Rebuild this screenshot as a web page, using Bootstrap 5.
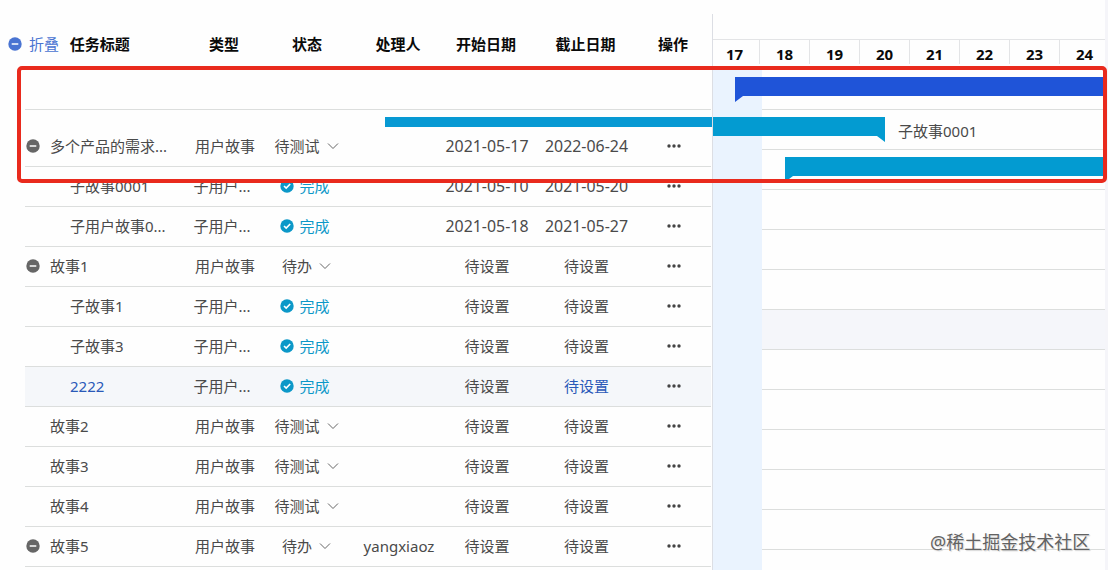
<!DOCTYPE html>
<html lang="zh-CN">
<head>
<meta charset="utf-8">
<meta name="viewport" content="width=device-width, initial-scale=1">
<title>任务甘特图</title>
<link href="https://cdn.jsdelivr.net/npm/bootstrap@5.3.0/dist/css/bootstrap.min.css" rel="stylesheet">
<style>
  body { font: 15px/20px "Noto Sans", "Noto Sans CJK SC", sans-serif; color: #4a4a4a; background: #fefefe; }
  .board { width: 1108px; height: 570px; }
  .task-pane { width: 712px; padding-left: 25px; padding-right: 1px; }
  .task-head { height: 69px; padding-top: 18px; margin-left: -25px; padding-left: 8px; color: #0a0a0a; font-weight: 700; }
  .task-row { height: 40px; border-bottom: 1px solid #dcdedd; padding-bottom: 1px; }
  .task-row.blank { height: 41px; }
  .task-row.tall { height: 57px; padding-top: 17px; }
  .task-row.active { background: #f5f7fa; }
  .cell-title { width: 168px; padding-left: 25px; flex: none; }
  .cell-title.top { padding-left: 1px; gap: 10px; }
  .cell-title.child { padding-left: 45px; }
  .cell-type { width: 64px; flex: none; }
  .cell-type.cut { padding-right: 6px; }
  .cell-status { width: 104px; padding-right: 5px; gap: 7px; flex: none; }
  .task-head .cell-status { padding-right: 2px; }
  .cell-status.done { color: #0c98c8; gap: 5px; padding-right: 8px; }
  .cell-user { width: 76px; flex: none; }
  .cell-start { width: 100px; flex: none; }
  .cell-end { width: 99px; flex: none; }
  .cell-op { width: 76px; flex: none; }
  .date { font-size: 15.9px; }
  .picked { color: #2a59b8; }
  .fold { color: #4a74d2; font-weight: 400; width: 62px; gap: 7px; }
  .head-title { width: 123px; }
  svg { flex: none; display: block; }

  .gantt { width: 393px; margin-top: 14px; border-left: 1px solid #dcdee4; }
  .month { height: 26px; border-bottom: 1px solid #e3e4e6; }
  .days { height: 29px; color: #0a0a0a; font-weight: 700; }
  .day { width: 50px; height: 24px; padding-top: 4px; border-right: 1px solid #e3e4e6; line-height: 20px; flex: none; }
  .day:first-child { width: 47px; padding-right: 3px; }
  .day:last-child { width: 45px; border: 0; padding-left: 4px; }
  .lanes { background: linear-gradient(90deg, #eaf3fe 49px, transparent 49px); height: 501px; }
  .lane { height: 40px; padding-top: 7px; }
  .lane::after { content: ""; position: absolute; left: 49px; right: 0; bottom: 0; height: 1px; background: #dcdedd; z-index: 0; }
  .lane:first-child { height: 41px; padding-top: 8px; }
  .lane.active { background: linear-gradient(90deg, transparent 49px, #f5f6fa 49px); }
  .bar { height: 25px; background: #039bd1; clip-path: polygon(0 0, 100% 0, 100% 19px, 8px 19px, 0 100%); }
  .bar.story { background: #1f54d8; margin-left: 22px; }
  .bar.first { width: 172px; clip-path: polygon(0 0, 100% 0, 100% 100%, calc(100% - 8px) 19px, 0 19px); }
  .bar.second { margin-left: 72px; }
  .bar-label { margin-left: 13px; padding-top: 4px; }
  .edge { width: 3px; background: #f5f5f9; }

  .overflow-bar { left: 385px; top: 117px; width: 327px; height: 10px; background: #0799d3; }
  .marker { left: 17px; top: 66px; width: 1090px; height: 117px; border: 4px solid #e92a1d; border-radius: 5px; z-index: 3; }
  .watermark { left: 930px; top: 531px; font-size: 18px; line-height: 22px; color: #626262; text-shadow: 0 0 2px #fff, 1px 1px 1px #ccc; white-space: nowrap; z-index: 3; }
</style>
</head>
<body>
<svg class="d-none" xmlns="http://www.w3.org/2000/svg">
  <symbol id="minus" viewBox="0 0 14 14"><circle cx="7" cy="7" r="6.7" fill="currentColor"/><path d="M3.7 7h6.6" stroke="#fff" stroke-width="1.5"/></symbol>
  <symbol id="check" viewBox="0 0 14 14"><circle cx="7" cy="7" r="6.7" fill="currentColor"/><path d="M4 7l2.2 2.1L10.2 5" fill="none" stroke="#fff" stroke-width="1.6"/></symbol>
  <symbol id="down" viewBox="0 0 12 12"><path d="M1 3.5l5 5 5-5" fill="none" stroke="#666" stroke-width="1"/></symbol>
  <symbol id="more" viewBox="0 0 14 4"><g fill="#444"><circle cx="2" cy="2" r="1.7"/><circle cx="7" cy="2" r="1.7"/><circle cx="12" cy="2" r="1.7"/></g></symbol>
</svg>

<main class="board d-flex position-relative overflow-hidden">
  <section class="task-pane flex-shrink-0">
    <header class="task-head d-flex align-items-center">
      <div class="fold d-flex align-items-center"><svg width="14" height="14"><use href="#minus"/></svg>折叠</div>
      <div class="head-title">任务标题</div>
      <div class="cell-type text-center">类型</div>
      <div class="cell-status text-center">状态</div>
      <div class="cell-user text-center">处理人</div>
      <div class="cell-start text-center">开始日期</div>
      <div class="cell-end text-center">截止日期</div>
      <div class="cell-op text-center">操作</div>
    </header>
    <div class="task-row blank"></div>
    <div class="task-row tall d-flex align-items-center">
      <div class="cell-title top d-flex align-items-center"><svg width="14" height="14" color="#666"><use href="#minus"/></svg><span>多个产品的需求...</span></div>
      <div class="cell-type text-center">用户故事</div>
      <div class="cell-status d-flex align-items-center justify-content-center">待测试<svg width="12" height="12"><use href="#down"/></svg></div>
      <div class="cell-user"></div>
      <div class="cell-start text-center date">2021-05-17</div><div class="cell-end text-center date">2022-06-24</div>
      <div class="cell-op d-flex justify-content-center"><svg width="14" height="4"><use href="#more"/></svg></div>
    </div>
    <div class="task-row d-flex align-items-center">
      <div class="cell-title child">子故事0001</div>
      <div class="cell-type cut text-center">子用户...</div>
      <div class="cell-status done d-flex align-items-center justify-content-center"><svg width="14" height="14"><use href="#check"/></svg>完成</div>
      <div class="cell-user"></div>
      <div class="cell-start text-center date">2021-05-10</div><div class="cell-end text-center date">2021-05-20</div>
      <div class="cell-op d-flex justify-content-center"><svg width="14" height="4"><use href="#more"/></svg></div>
    </div>
    <div class="task-row d-flex align-items-center">
      <div class="cell-title child">子用户故事0...</div>
      <div class="cell-type cut text-center">子用户...</div>
      <div class="cell-status done d-flex align-items-center justify-content-center"><svg width="14" height="14"><use href="#check"/></svg>完成</div>
      <div class="cell-user"></div>
      <div class="cell-start text-center date">2021-05-18</div><div class="cell-end text-center date">2021-05-27</div>
      <div class="cell-op d-flex justify-content-center"><svg width="14" height="4"><use href="#more"/></svg></div>
    </div>
    <div class="task-row d-flex align-items-center">
      <div class="cell-title top d-flex align-items-center"><svg width="14" height="14" color="#666"><use href="#minus"/></svg><span>故事1</span></div>
      <div class="cell-type text-center">用户故事</div>
      <div class="cell-status d-flex align-items-center justify-content-center">待办<svg width="12" height="12"><use href="#down"/></svg></div>
      <div class="cell-user"></div>
      <div class="cell-start text-center">待设置</div><div class="cell-end text-center">待设置</div>
      <div class="cell-op d-flex justify-content-center"><svg width="14" height="4"><use href="#more"/></svg></div>
    </div>
    <div class="task-row d-flex align-items-center">
      <div class="cell-title child">子故事1</div>
      <div class="cell-type cut text-center">子用户...</div>
      <div class="cell-status done d-flex align-items-center justify-content-center"><svg width="14" height="14"><use href="#check"/></svg>完成</div>
      <div class="cell-user"></div>
      <div class="cell-start text-center">待设置</div><div class="cell-end text-center">待设置</div>
      <div class="cell-op d-flex justify-content-center"><svg width="14" height="4"><use href="#more"/></svg></div>
    </div>
    <div class="task-row d-flex align-items-center">
      <div class="cell-title child">子故事3</div>
      <div class="cell-type cut text-center">子用户...</div>
      <div class="cell-status done d-flex align-items-center justify-content-center"><svg width="14" height="14"><use href="#check"/></svg>完成</div>
      <div class="cell-user"></div>
      <div class="cell-start text-center">待设置</div><div class="cell-end text-center">待设置</div>
      <div class="cell-op d-flex justify-content-center"><svg width="14" height="4"><use href="#more"/></svg></div>
    </div>
    <div class="task-row active d-flex align-items-center">
      <div class="cell-title child picked">2222</div>
      <div class="cell-type cut text-center">子用户...</div>
      <div class="cell-status done d-flex align-items-center justify-content-center"><svg width="14" height="14"><use href="#check"/></svg>完成</div>
      <div class="cell-user"></div>
      <div class="cell-start text-center">待设置</div><div class="cell-end text-center picked">待设置</div>
      <div class="cell-op d-flex justify-content-center"><svg width="14" height="4"><use href="#more"/></svg></div>
    </div>
    <div class="task-row d-flex align-items-center">
      <div class="cell-title">故事2</div>
      <div class="cell-type text-center">用户故事</div>
      <div class="cell-status d-flex align-items-center justify-content-center">待测试<svg width="12" height="12"><use href="#down"/></svg></div>
      <div class="cell-user"></div>
      <div class="cell-start text-center">待设置</div><div class="cell-end text-center">待设置</div>
      <div class="cell-op d-flex justify-content-center"><svg width="14" height="4"><use href="#more"/></svg></div>
    </div>
    <div class="task-row d-flex align-items-center">
      <div class="cell-title">故事3</div>
      <div class="cell-type text-center">用户故事</div>
      <div class="cell-status d-flex align-items-center justify-content-center">待测试<svg width="12" height="12"><use href="#down"/></svg></div>
      <div class="cell-user"></div>
      <div class="cell-start text-center">待设置</div><div class="cell-end text-center">待设置</div>
      <div class="cell-op d-flex justify-content-center"><svg width="14" height="4"><use href="#more"/></svg></div>
    </div>
    <div class="task-row d-flex align-items-center">
      <div class="cell-title">故事4</div>
      <div class="cell-type text-center">用户故事</div>
      <div class="cell-status d-flex align-items-center justify-content-center">待测试<svg width="12" height="12"><use href="#down"/></svg></div>
      <div class="cell-user"></div>
      <div class="cell-start text-center">待设置</div><div class="cell-end text-center">待设置</div>
      <div class="cell-op d-flex justify-content-center"><svg width="14" height="4"><use href="#more"/></svg></div>
    </div>
    <div class="task-row d-flex align-items-center">
      <div class="cell-title top d-flex align-items-center"><svg width="14" height="14" color="#666"><use href="#minus"/></svg><span>故事5</span></div>
      <div class="cell-type text-center">用户故事</div>
      <div class="cell-status d-flex align-items-center justify-content-center">待办<svg width="12" height="12"><use href="#down"/></svg></div>
      <div class="cell-user text-center">yangxiaoz</div>
      <div class="cell-start text-center">待设置</div><div class="cell-end text-center">待设置</div>
      <div class="cell-op d-flex justify-content-center"><svg width="14" height="4"><use href="#more"/></svg></div>
    </div>
  </section>

  <section class="gantt flex-shrink-0">
    <div class="month"></div>
    <div class="days d-flex text-center">
      <div class="day">17</div><div class="day">18</div><div class="day">19</div><div class="day">20</div><div class="day">21</div><div class="day">22</div><div class="day">23</div><div class="day">24</div>
    </div>
    <div class="lanes">
      <div class="lane position-relative"><div class="bar story"></div></div>
      <div class="lane position-relative d-flex"><div class="bar first"></div><span class="bar-label">子故事0001</span></div>
      <div class="lane position-relative"><div class="bar second"></div></div>
      <div class="lane position-relative"></div>
      <div class="lane position-relative"></div>
      <div class="lane position-relative"></div>
      <div class="lane position-relative active"></div>
      <div class="lane position-relative"></div>
      <div class="lane position-relative"></div>
      <div class="lane position-relative"></div>
      <div class="lane position-relative"></div>
      <div class="lane position-relative"></div>
    </div>
  </section>
  <div class="edge"></div>

  <div class="overflow-bar position-absolute"></div>
  <div class="marker position-absolute"></div>
  <div class="watermark position-absolute">@稀土掘金技术社区</div>
</main>
<script src="https://cdn.jsdelivr.net/npm/bootstrap@5.3.0/dist/js/bootstrap.bundle.min.js"></script>
</body>
</html>
